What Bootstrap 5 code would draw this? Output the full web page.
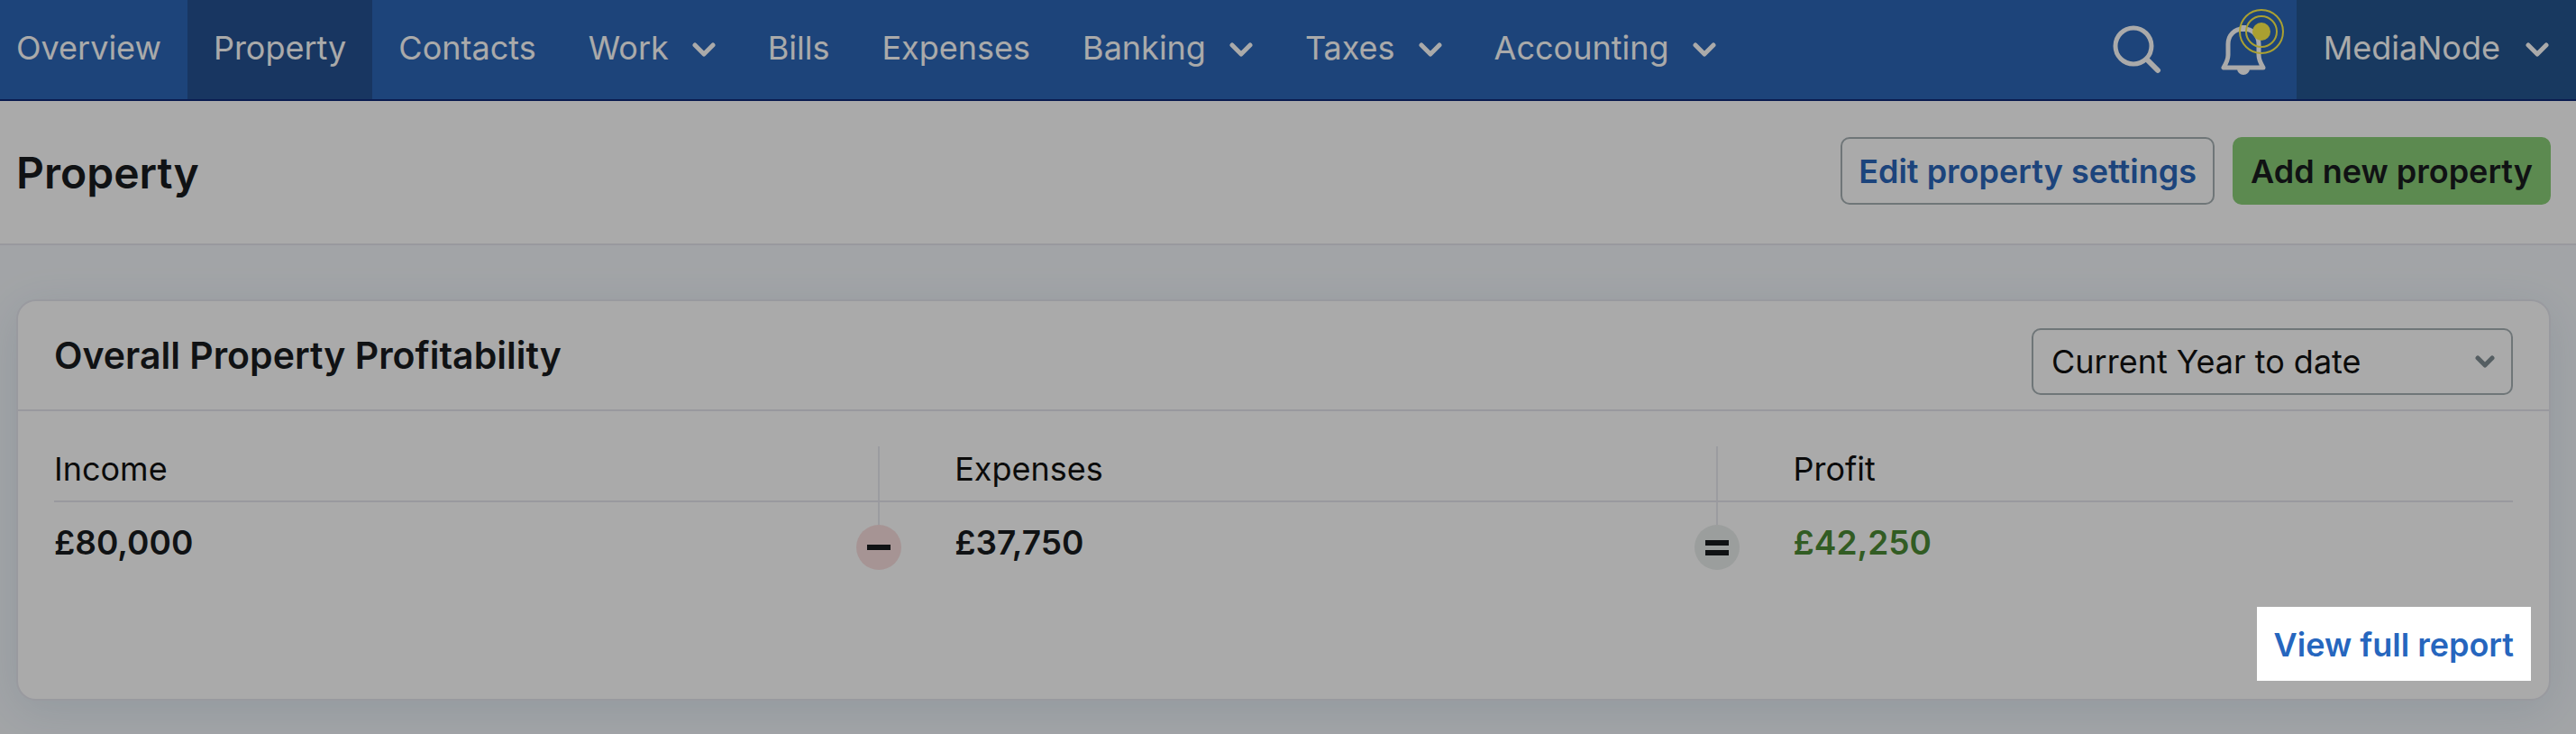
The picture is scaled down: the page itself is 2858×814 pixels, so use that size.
<!DOCTYPE html>
<html lang="en">
<head>
<meta charset="utf-8">
<meta name="viewport" content="width=device-width, initial-scale=1">
<title>Property</title>
<link href="https://cdn.jsdelivr.net/npm/bootstrap@5.3.0/dist/css/bootstrap.min.css" rel="stylesheet">
<style>
  body {
    font-family: Inter, "Open Sans", sans-serif;
    font-size: 36px;
    line-height: 50px;
    color: #191b1e;
    background: #f4f7fb;
  }
  .topbar {
    background: #2c67b7;
    border-bottom: 2px solid #102a78;
  }
  .topbar .nav-link {
    display: flex;
    align-items: center;
    gap: 28px;
    height: 110px;
    padding: 0 30px 4px;
    color: #fff;
    white-space: nowrap;
  }
  .topbar .navbar-nav .nav-link { gap: 26px; padding: 0 29px 4px; }
  .topbar .navbar-nav .nav-item:first-child .nav-link { padding-left: 18px; }
  .topbar .navbar-nav .nav-link.active { background: #245292; color: #fff; }
  .topbar .account-menu { background: #255690; }
  .topbar .chev { box-sizing: content-box; padding-top: 3px; }
  .icon-btn { color: #fff; border: 0; background: none; padding: 0; line-height: 0; }
  .topbar-tools { gap: 66px; padding-right: 34px; }
  .alert-pulse { top: -18px; left: 19px; }

  .page-head {
    background: #fff;
    border-bottom: 2px solid #e6e6ee;
    padding: 40px 28px 38px 18px;
  }
  .page-head h1 { font-size: 48px; font-weight: 600; line-height: 80px; }
  .page-actions { gap: 20px; }
  .btn-page {
    font-size: 36px;
    font-weight: 600;
    line-height: 50px;
    padding: 11px 18px 10px;
    border-width: 2px;
    border-radius: 10px;
  }
  .btn-edit, .btn-edit:hover { color: #2a66ba; border-color: #a7b1b5; background: #fff; }
  .btn-add, .btn-add:hover { color: #191b1e; border-color: #8bcf78; background: #8bcf78; }

  .page-main { padding: 60px 28px 38px 18px; }
  .summary {
    border: 2px solid #e6e7ef;
    border-radius: 22px;
    box-shadow: 0 10px 50px rgba(70, 125, 160, .14);
  }
  .summary-head { border-bottom: 2px solid #e6e6ee; padding: 30px 40px 16px; }
  .summary-head h2 { font-size: 41px; font-weight: 600; line-height: 60px; }
  .period {
    width: 534px;
    font-size: 36px;
    line-height: 50px;
    padding: 10px 70px 10px 20px;
    color: #111;
    border: 2px solid #a7b1b5;
    border-radius: 10px;
    background-image: url("data:image/svg+xml,%3Csvg xmlns='http://www.w3.org/2000/svg' viewBox='0 0 22 14'%3E%3Cpath d='M3 3l8 8 8-8' fill='none' stroke='%23808d94' stroke-width='5' stroke-linecap='round' stroke-linejoin='round'/%3E%3C/svg%3E");
    background-size: 22px 14px;
    background-position: right 18px center;
  }
  .summary-body { padding: 39px 40px 20px; }
  .totals { width: 100%; table-layout: fixed; border-collapse: separate; border-spacing: 0; }
  .totals th { font-weight: 400; padding: 0 0 10px; border-bottom: 2px solid #e6e6ee; color: #111; }
  .totals td { font-size: 37px; font-weight: 600; padding: 20px 0 46px; }
  .totals .joined { position: relative; padding-left: 84px; }
  .totals .joined::before {
    content: "";
    position: absolute;
    left: -1px;
    top: 0;
    bottom: 0;
    width: 2px;
    background: #e9eaf0;
  }
  .totals td.joined::before { bottom: auto; height: 25px; }
  .operator { top: 25px; left: -25px; width: 50px; height: 50px; }
  .minus-bg { background: #f9dfdf; }
  .equals-bg { background: #e9edec; }
  .gain { color: #4c8a35; }

  /* tour step: the link stays lit while the rest of the page is dimmed */
  .spotlight {
    margin-right: -20px;
    padding: 17px 19px 15px;
    font-weight: 600;
    color: #2666be;
    background: #fff;
    text-decoration: none;
    z-index: 1050;
    box-shadow: 0 0 0 9999px rgba(0, 0, 0, .333);
  }
</style>
</head>
<body>
<nav class="topbar navbar navbar-expand p-0" aria-label="Main">
  <div class="d-flex w-100 align-items-stretch justify-content-between">
    <ul class="navbar-nav">
      <li class="nav-item"><a class="nav-link" href="#">Overview</a></li>
      <li class="nav-item"><a class="nav-link active" aria-current="page" href="#">Property</a></li>
      <li class="nav-item"><a class="nav-link" href="#">Contacts</a></li>
      <li class="nav-item"><a class="nav-link" href="#" role="button">Work <svg class="chev" width="26" height="16" viewBox="0 0 26 16" fill="none" stroke="currentColor" stroke-width="5" stroke-linecap="round" stroke-linejoin="round" aria-hidden="true"><path d="M3 3l10 10L23 3"/></svg></a></li>
      <li class="nav-item"><a class="nav-link" href="#">Bills</a></li>
      <li class="nav-item"><a class="nav-link" href="#">Expenses</a></li>
      <li class="nav-item"><a class="nav-link" href="#" role="button">Banking <svg class="chev" width="26" height="16" viewBox="0 0 26 16" fill="none" stroke="currentColor" stroke-width="5" stroke-linecap="round" stroke-linejoin="round" aria-hidden="true"><path d="M3 3l10 10L23 3"/></svg></a></li>
      <li class="nav-item"><a class="nav-link" href="#" role="button">Taxes <svg class="chev" width="26" height="16" viewBox="0 0 26 16" fill="none" stroke="currentColor" stroke-width="5" stroke-linecap="round" stroke-linejoin="round" aria-hidden="true"><path d="M3 3l10 10L23 3"/></svg></a></li>
      <li class="nav-item"><a class="nav-link" href="#" role="button">Accounting <svg class="chev" width="26" height="16" viewBox="0 0 26 16" fill="none" stroke="currentColor" stroke-width="5" stroke-linecap="round" stroke-linejoin="round" aria-hidden="true"><path d="M3 3l10 10L23 3"/></svg></a></li>
    </ul>
    <div class="d-flex align-items-center">
      <div class="topbar-tools d-flex align-items-center">
        <button type="button" class="icon-btn" aria-label="Search">
          <svg width="54" height="54" viewBox="0 0 54 54" fill="none" stroke="currentColor" stroke-linecap="round"><circle cx="23" cy="23" r="20" stroke-width="5"/><path d="M38 38l12 12" stroke-width="6"/></svg>
        </button>
        <button type="button" class="icon-btn position-relative" aria-label="Notifications">
          <svg width="50" height="56" viewBox="0 0 50 56" fill="none" stroke="currentColor" stroke-width="5" stroke-linejoin="round"><path d="M25 5C15 5 8 12 8 22v12c0 5-2 9-5 14h44c-3-5-5-9-5-14V22C42 12 35 5 25 5z"/><path d="M22 1h6v7h-6zM18 49a7 7 0 0 0 14 0z" fill="currentColor" stroke="none"/></svg>
          <svg class="alert-pulse position-absolute" width="52" height="52" viewBox="0 0 52 52" fill="none" stroke="#fff04a" stroke-width="2" aria-hidden="true"><circle cx="26" cy="26" r="24"/><circle cx="26" cy="26" r="17"/><circle cx="26" cy="26" r="10" fill="#fff04a" stroke="none"/></svg>
        </button>
      </div>
      <a class="nav-link account-menu" href="#" role="button">MediaNode <svg class="chev" width="26" height="16" viewBox="0 0 26 16" fill="none" stroke="currentColor" stroke-width="5" stroke-linecap="round" stroke-linejoin="round" aria-hidden="true"><path d="M3 3l10 10L23 3"/></svg></a>
    </div>
  </div>
</nav>

<header class="page-head d-flex justify-content-between align-items-start">
  <h1 class="m-0">Property</h1>
  <div class="page-actions d-flex">
    <button type="button" class="btn btn-page btn-edit">Edit property settings</button>
    <button type="button" class="btn btn-page btn-add">Add new property</button>
  </div>
</header>

<main class="page-main">
  <section class="card summary">
    <div class="summary-head d-flex justify-content-between align-items-start">
      <h2 class="m-0">Overall Property Profitability</h2>
      <select class="form-select period" aria-label="Period"><option>Current Year to date</option></select>
    </div>
    <div class="summary-body">
      <table class="totals">
        <colgroup><col style="width:33.550%"><col style="width:34.100%"><col></colgroup>
        <thead>
          <tr><th scope="col">Income</th><th scope="col" class="joined">Expenses</th><th scope="col" class="joined">Profit</th></tr>
        </thead>
        <tbody>
          <tr>
            <td>£80,000</td>
            <td class="joined"><svg class="operator minus-bg position-absolute rounded-circle" viewBox="0 0 50 50" role="img" aria-label="minus"><path d="M12 22h26v6H12z" fill="#191b1e"/></svg>£37,750</td>
            <td class="joined gain"><svg class="operator equals-bg position-absolute rounded-circle" viewBox="0 0 50 50" role="img" aria-label="equals"><path d="M12 17h26v6H12zM12 28h26v6H12z" fill="#191b1e"/></svg>£42,250</td>
          </tr>
        </tbody>
      </table>
      <div class="d-flex justify-content-end"><a class="spotlight position-relative" href="#">View full report</a></div>
    </div>
  </section>
</main>
<script src="https://cdn.jsdelivr.net/npm/bootstrap@5.3.0/dist/js/bootstrap.bundle.min.js"></script>
</body>
</html>
